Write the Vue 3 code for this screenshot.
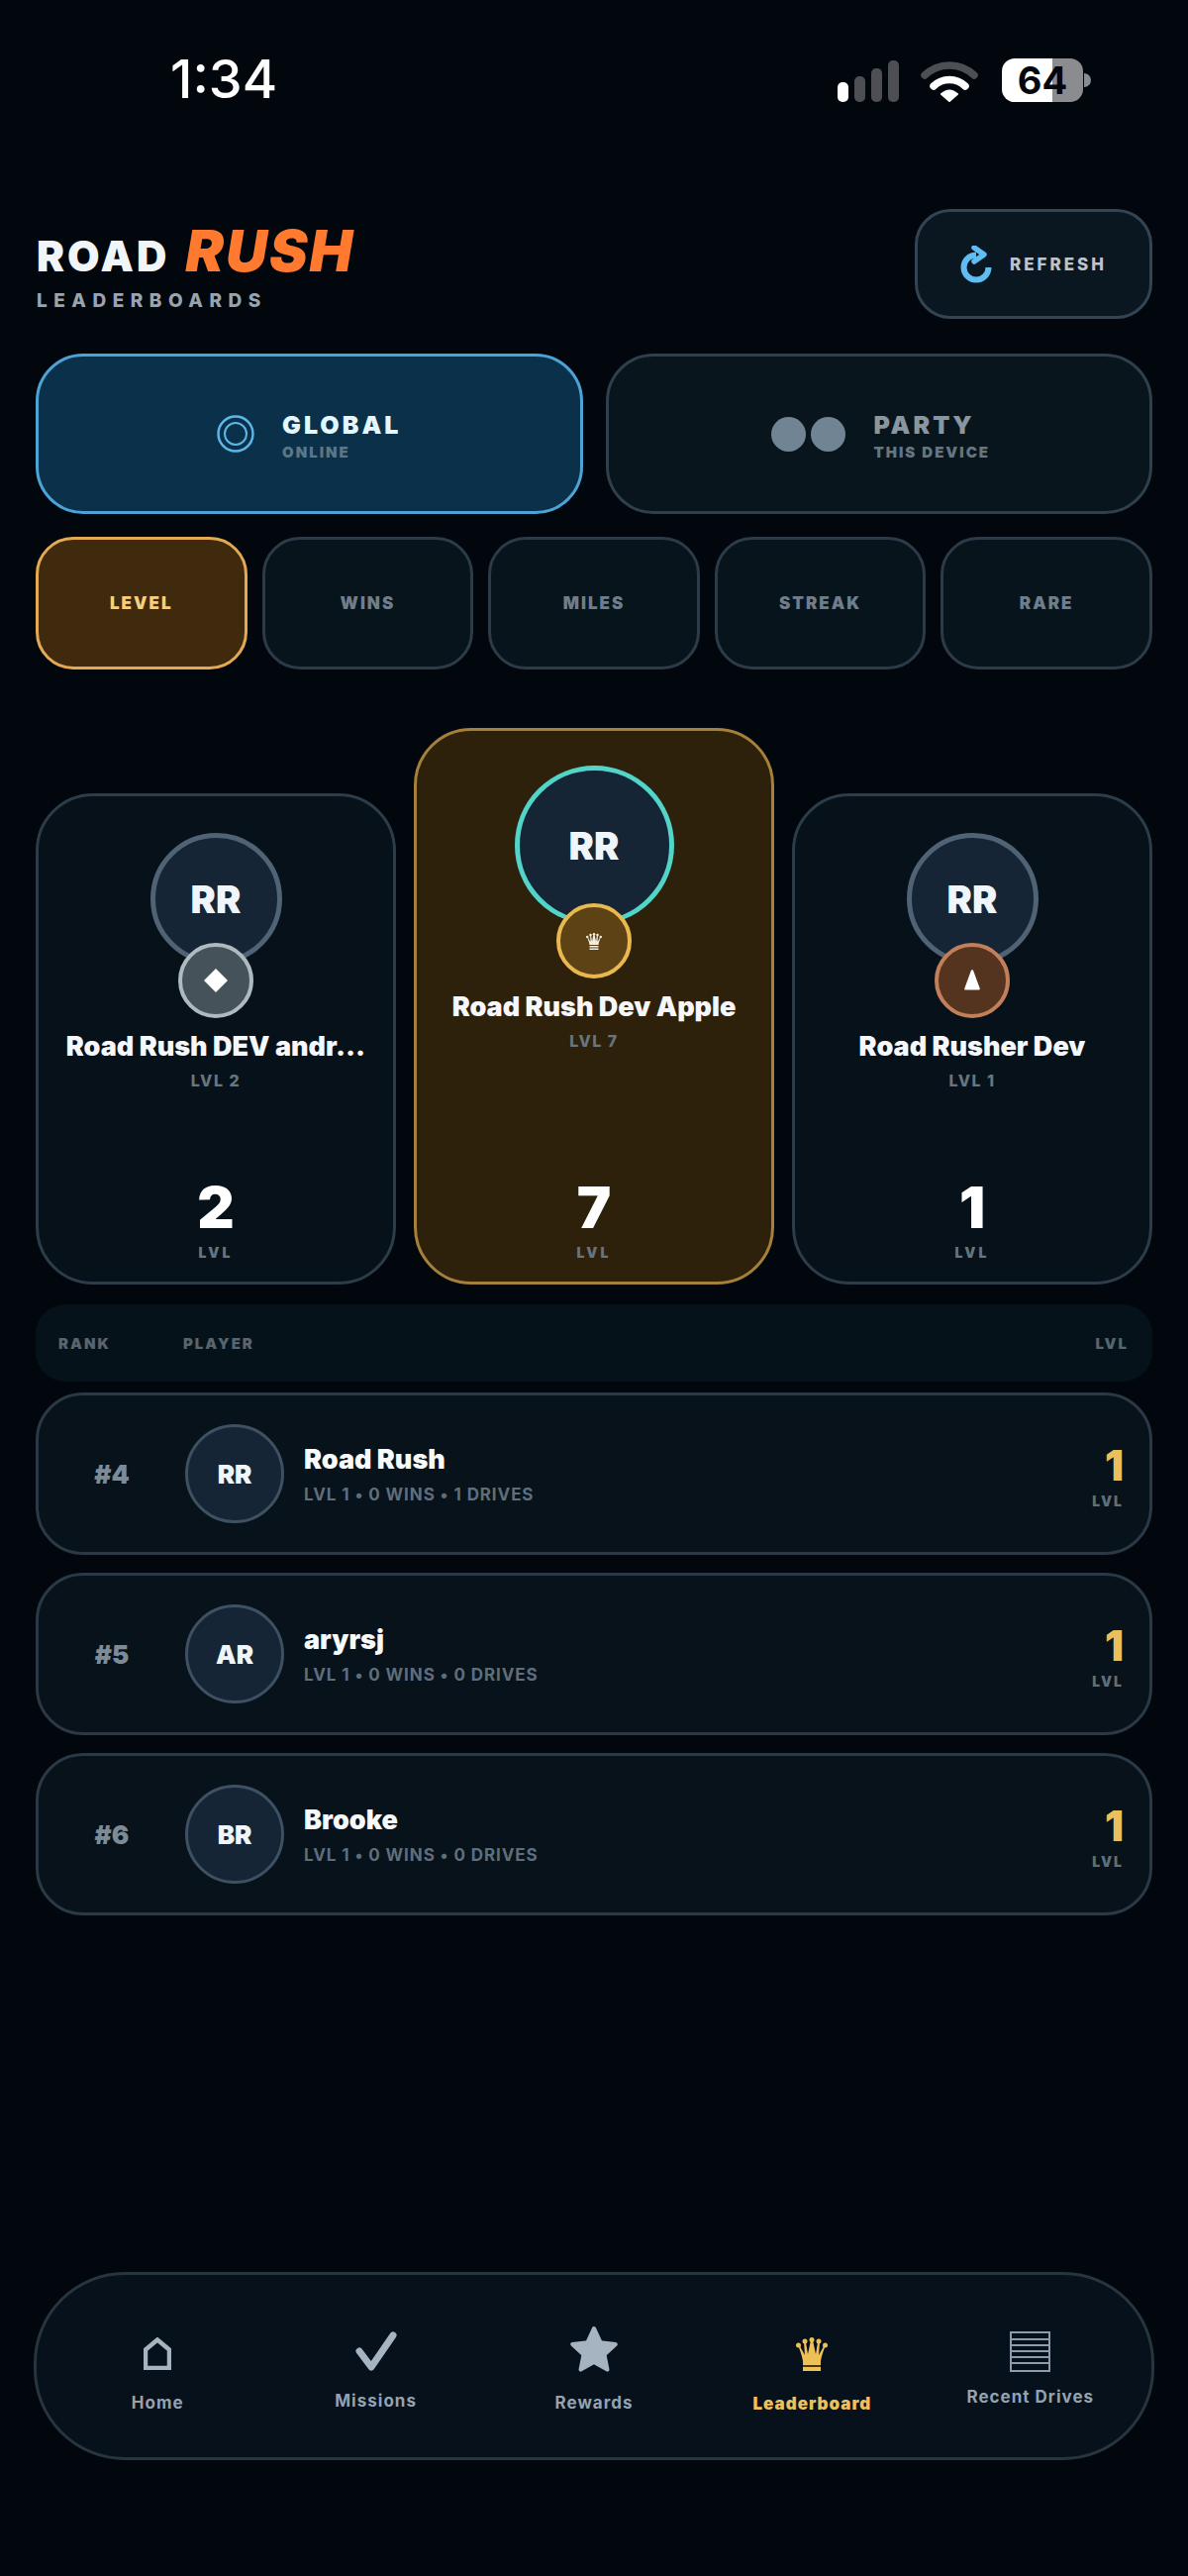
<script setup>
const metrics = ['LEVEL', 'WINS', 'MILES', 'STREAK', 'RARE']

const rows = [
  { rank: '#4', initials: 'RR', name: 'Road Rush', sub: 'LVL 1 • 0 WINS • 1 DRIVES', value: 1 },
  { rank: '#5', initials: 'AR', name: 'aryrsj', sub: 'LVL 1 • 0 WINS • 0 DRIVES', value: 1 },
  { rank: '#6', initials: 'BR', name: 'Brooke', sub: 'LVL 1 • 0 WINS • 0 DRIVES', value: 1 }
]
</script>

<template>
  <div class="page">
    <div class="status">
      <div class="time">1:34</div>
      <div class="status-icons">
        <div class="signal">
          <span class="bar on b1"></span>
          <span class="bar b2"></span>
          <span class="bar b3"></span>
          <span class="bar b4"></span>
        </div>
        <svg class="wifi" width="58" height="42" viewBox="0 0 58 42">
          <path d="M4 15A36 36 0 0 1 54 15" fill="none" stroke="#4d4f54" stroke-width="7.5" stroke-linecap="round" />
          <path d="M13 26A23 23 0 0 1 45 26" fill="none" stroke="#fff" stroke-width="7.5" stroke-linecap="round" />
          <path d="M21 34Q29 27 37 34L29 41Z" fill="#fff" stroke="#fff" stroke-width="2" stroke-linejoin="round" />
        </svg>
        <div class="battery"><span>64</span></div>
        <span class="nub"></span>
      </div>
    </div>

    <header class="head">
      <div>
        <h1 class="title"><span class="road">ROAD</span> <em class="rush">RUSH</em></h1>
        <div class="subtitle">LEADERBOARDS</div>
      </div>
      <button class="refresh">
        <svg width="32" height="38" viewBox="0 0 32 38">
          <path d="M16 9.500A12.500 12.500 0 1 0 28.500 22" fill="none" stroke="#5fbdf2" stroke-width="6" />
          <path d="M14 2L24 9L14 16" fill="none" stroke="#5fbdf2" stroke-width="5.500" stroke-linejoin="round" stroke-linecap="round" />
        </svg>
        <span>REFRESH</span>
      </button>
    </header>

    <div class="scopes">
      <div class="scope active">
        <svg width="38" height="38" viewBox="0 0 38 38">
          <circle cx="19" cy="19" r="17.500" fill="none" stroke="#5db6e8" stroke-width="2.500" />
          <circle cx="19" cy="19" r="11" fill="none" stroke="#5db6e8" stroke-width="2" />
        </svg>
        <div>
          <div class="scope-name">GLOBAL</div>
          <div class="scope-sub">ONLINE</div>
        </div>
      </div>
      <div class="scope">
        <div class="dots"><span></span><span></span></div>
        <div>
          <div class="scope-name">PARTY</div>
          <div class="scope-sub">THIS DEVICE</div>
        </div>
      </div>
    </div>

    <div class="metrics">
      <div v-for="(m, i) in metrics" :key="m" class="metric" :class="{ active: i === 0 }">{{ m }}</div>
    </div>

    <div class="podium">
      <div class="card">
        <div class="avatar-lg">RR</div>
        <div class="medal silver">
          <svg width="26" height="26" viewBox="0 0 26 26"><path d="M13 1L25 13L13 25L1 13Z" fill="#fff" /></svg>
        </div>
        <div class="card-name">Road Rush DEV andr...</div>
        <div class="card-lvl">LVL 2</div>
        <div class="card-num">2</div>
        <div class="card-unit">LVL</div>
      </div>
      <div class="card first">
        <div class="avatar-lg big">RR</div>
        <div class="medal gold">
          <svg width="16" height="17" viewBox="0 0 32 34">
            <path d="M7 24C6 18 4 13 2.500 9L4 9C6 13 8 16 9 18L8 5L10 5L12 17L15 3L17 3L20 17L22 5L24 5L23 18C24 16 26 13 28 9L29.500 9C28 13 26 18 25 24Z" fill="#f3efe4" />
            <circle cx="2.500" cy="8" r="2.500" fill="#f3efe4" /><circle cx="9" cy="4" r="2.500" fill="#f3efe4" />
            <circle cx="16" cy="2.500" r="2.500" fill="#f3efe4" /><circle cx="23" cy="4" r="2.500" fill="#f3efe4" />
            <circle cx="29.500" cy="8" r="2.500" fill="#f3efe4" />
            <rect x="7" y="26" width="18" height="3" fill="#f3efe4" /><rect x="7" y="31" width="18" height="3" fill="#f3efe4" />
          </svg>
        </div>
        <div class="card-name">Road Rush Dev Apple</div>
        <div class="card-lvl">LVL 7</div>
        <div class="card-num">7</div>
        <div class="card-unit">LVL</div>
      </div>
      <div class="card">
        <div class="avatar-lg">RR</div>
        <div class="medal bronze">
          <svg width="24" height="24" viewBox="0 0 20 20"><path d="M10 2L15.500 17H4.500Z" fill="#fff" stroke="#fff" stroke-width="2" stroke-linejoin="round" /></svg>
        </div>
        <div class="card-name">Road Rusher Dev</div>
        <div class="card-lvl">LVL 1</div>
        <div class="card-num">1</div>
        <div class="card-unit">LVL</div>
      </div>
    </div>

    <div class="table-head">
      <span class="th-rank">RANK</span>
      <span class="th-player">PLAYER</span>
      <span>LVL</span>
    </div>

    <div class="rows">
      <div v-for="r in rows" :key="r.rank" class="row">
        <div class="rank">{{ r.rank }}</div>
        <div class="avatar">{{ r.initials }}</div>
        <div class="who">
          <div class="who-name">{{ r.name }}</div>
          <div class="who-sub">{{ r.sub }}</div>
        </div>
        <div class="score">
          <div class="score-num">{{ r.value }}</div>
          <div class="score-unit">LVL</div>
        </div>
      </div>
    </div>

    <nav class="nav">
      <div class="nav-item">
        <svg class="ic-home" width="28" height="33" viewBox="0 0 28 33">
          <path d="M2 31V12.500L14 2.500L26 12.500V31Z" fill="none" stroke="#a6b3c0" stroke-width="4.500" />
        </svg>
        <span>Home</span>
      </div>
      <div class="nav-item">
        <svg class="ic-check" width="44" height="44" viewBox="0 0 44 44">
          <path d="M5 21L17 37L39 5" fill="none" stroke="#a6b3c0" stroke-width="7" stroke-linecap="round" stroke-linejoin="round" />
        </svg>
        <span>Missions</span>
      </div>
      <div class="nav-item">
        <svg class="ic-star" width="54" height="52" viewBox="0 0 50 50">
          <path d="M25 4L31.200 17.500L45.900 19.200L35 29.200L37.900 43.800L25 36.500L12.100 43.800L15 29.200L4.100 19.200L18.800 17.500Z" fill="#a6b3c0" stroke="#a6b3c0" stroke-width="4" stroke-linejoin="round" />
        </svg>
        <span>Rewards</span>
      </div>
      <div class="nav-item lead">
        <svg class="ic-crown" width="32" height="34" viewBox="0 0 32 34">
          <path d="M7 24C6 18 4 13 2.500 9L4 9C6 13 8 16 9 18L8 5L10 5L12 17L15 3L17 3L20 17L22 5L24 5L23 18C24 16 26 13 28 9L29.500 9C28 13 26 18 25 24Z" fill="#efc058" />
          <circle cx="2.500" cy="8" r="2.500" fill="#efc058" /><circle cx="9" cy="4" r="2.500" fill="#efc058" />
          <circle cx="16" cy="2.500" r="2.500" fill="#efc058" /><circle cx="23" cy="4" r="2.500" fill="#efc058" />
          <circle cx="29.500" cy="8" r="2.500" fill="#efc058" />
          <rect x="7" y="24" width="18" height="10" fill="#efc058" /><rect x="7" y="28" width="18" height="2" fill="#4a3412" />
        </svg>
        <span>Leaderboard</span>
      </div>
      <div class="nav-item recent">
        <svg class="ic-list" width="41" height="41" viewBox="0 0 41 41">
          <rect x="1" y="1" width="39" height="39" fill="none" stroke="#8e9bab" stroke-width="2" />
          <path d="M1 7H40M1 13H40M1 19H40M1 25H40M1 31H40" stroke="#8e9bab" stroke-width="2" transform="translate(0 1)" />
        </svg>
        <span>Recent Drives</span>
      </div>
    </nav>
  </div>
</template>

<style>
  html, body {
    margin: 0;
    background: #02060d;
  }
</style>

<style scoped>
  * {
    box-sizing: border-box;
  }

  .page {
    width: 1200px;
    height: 2601px;
    padding: 0 36px;
    font-family: Inter, "Liberation Sans", sans-serif;
    color: #fff;
    background: #02060d;
  }

  .status {
    height: 211px;
    padding: 50px 62px 0 136px;
    display: flex;
    justify-content: space-between;
    align-items: flex-start;
  }

  .time {
    font-size: 54px;
    line-height: 60px;
    font-weight: 500;
  }

  .status-icons {
    display: flex;
    align-items: flex-end;
    margin-top: 9px;
  }

  .signal {
    display: flex;
    align-items: flex-end;
    gap: 6px;
    margin-right: 22px;
  }

  .bar {
    width: 11px;
    border-radius: 5px;
    background: #4d4f54;
  }

  .bar.on { background: #fff; }
  .b1 { height: 20px; }
  .b2 { height: 26px; }
  .b3 { height: 34px; }
  .b4 { height: 42px; }

  .wifi {
    margin-right: 24px;
  }

  .battery {
    width: 82px;
    height: 44px;
    border-radius: 13px;
    background: linear-gradient(90deg, #fff 0 62%, #8b8c90 62% 100%);
    display: flex;
    align-items: center;
    justify-content: center;
    color: #05070c;
    font-size: 38px;
    font-weight: 700;
    line-height: 44px;
  }

  .nub {
    width: 7px;
    height: 14px;
    margin-bottom: 15px;
    margin-left: 1px;
    border-radius: 0 7px 7px 0;
    background: #8b8c90;
  }

  .head {
    height: 111px;
    display: flex;
    justify-content: space-between;
    align-items: flex-start;
  }

  .title {
    margin: 14px 0 0 1px;
    line-height: 56px;
    font-size: 42px;
    font-weight: 900;
    display: flex;
    align-items: baseline;
    gap: 16px;
  }

  .road {
    color: #f2f5f8;
    letter-spacing: 3px;
  }

  .rush {
    font-size: 58px;
    color: #ff7a2f;
    font-style: italic;
    letter-spacing: 2px;
  }

  .subtitle {
    margin: 6px 0 0 1px;
    font-size: 19px;
    line-height: 22px;
    font-weight: 800;
    letter-spacing: 6.500px;
    color: #98a3ad;
  }

  .refresh {
    width: 240px;
    height: 111px;
    border: 3px solid #334554;
    border-radius: 36px;
    background: #0a1620;
    display: flex;
    align-items: center;
    justify-content: center;
    gap: 18px;
    font-family: inherit;
    font-size: 17px;
    font-weight: 800;
    letter-spacing: 3px;
    color: #b8c4ce;
  }

  .scopes {
    margin-top: 35px;
    display: grid;
    grid-template-columns: 1fr 1fr;
    gap: 23px;
  }

  .scope {
    height: 162px;
    border: 3.500px solid #2f3f4b;
    border-radius: 48px;
    background: #08151d;
    display: flex;
    align-items: center;
    justify-content: center;
    gap: 28px;
  }

  .scope.active {
    background: #0a3149;
    border-color: #4ba3d6;
  }

  .scope-name {
    padding-top: 3px;
    font-size: 25px;
    line-height: 30px;
    font-weight: 900;
    letter-spacing: 3px;
    color: #8996a0;
  }

  .scope-sub {
    margin-top: 4px;
    font-size: 15px;
    line-height: 18px;
    font-weight: 900;
    letter-spacing: 2px;
    color: #66757f;
  }

  .active .scope-name { color: #e6f6ff; }
  .active .scope-sub { color: #5a7688; }

  .dots {
    display: flex;
    gap: 5px;
    margin-left: 4px;
  }

  .dots span {
    width: 35px;
    height: 35px;
    border-radius: 50%;
    background: #718494;
  }

  .metrics {
    margin-top: 23px;
    display: grid;
    grid-template-columns: repeat(5, 1fr);
    gap: 15px;
  }

  .metric {
    height: 134px;
    border: 3.500px solid #2c3b47;
    border-radius: 38px;
    background: #08141c;
    display: flex;
    align-items: center;
    justify-content: center;
    font-size: 17px;
    font-weight: 900;
    letter-spacing: 2px;
    color: #6f7e8a;
  }

  .metric.active {
    background: #3f2a0d;
    border-color: #e3a953;
    color: #f5cf7f;
  }

  .podium {
    margin-top: 59px;
    display: grid;
    grid-template-columns: repeat(3, 364px);
    justify-content: space-between;
    align-items: end;
  }

  .card {
    height: 496px;
    padding-top: 37px;
    border: 3.500px solid #2d3c49;
    border-radius: 58px;
    background: #06111a;
    display: flex;
    flex-direction: column;
    align-items: center;
  }

  .card.first {
    height: 562px;
    padding-top: 35px;
    border-color: #a5803a;
    background: #2e210b;
  }

  .avatar-lg {
    width: 133px;
    height: 133px;
    flex: none;
    border: 5px solid #4f6375;
    border-radius: 50%;
    background: #152535;
    display: flex;
    align-items: center;
    justify-content: center;
    font-size: 38px;
    font-weight: 900;
    color: #f0f5fa;
  }

  .avatar-lg.big {
    width: 161px;
    height: 161px;
    border-color: #52d4c8;
  }

  .medal {
    position: relative;
    width: 76px;
    height: 76px;
    flex: none;
    margin-top: -22px;
    border: 4px solid;
    border-radius: 50%;
    display: flex;
    align-items: center;
    justify-content: center;
  }

  .silver { background: #45525a; border-color: #aeb9c0; }
  .gold { background: #5c4214; border-color: #e9b84f; }
  .bronze { background: #54331f; border-color: #c1805a; }

  .card-name {
    margin-top: 12px;
    font-size: 27px;
    line-height: 34px;
    font-weight: 900;
    color: #f5f7fa;
  }

  .card-lvl {
    margin-top: 7px;
    font-size: 16px;
    line-height: 20px;
    font-weight: 800;
    letter-spacing: 1.500px;
    color: #66757f;
  }

  .card-num {
    margin-top: auto;
    font-size: 58px;
    line-height: 64px;
    font-weight: 900;
    color: #fff;
    transform: translateY(-1px);
  }

  .card-unit {
    margin: 4px 0 20px;
    font-size: 14px;
    line-height: 18px;
    font-weight: 900;
    letter-spacing: 3px;
    color: #66757f;
  }

  .table-head {
    margin-top: 20px;
    height: 78px;
    padding: 0 24px 0 23px;
    border-radius: 30px;
    background: #06121a;
    display: flex;
    align-items: center;
    font-size: 15px;
    font-weight: 900;
    letter-spacing: 2px;
    color: #56656f;
  }

  .th-rank { width: 126px; }
  .th-player { flex: 1; }

  .rows {
    margin-top: 11px;
    display: flex;
    flex-direction: column;
    gap: 18px;
  }

  .row {
    height: 164px;
    padding: 0 26px 0 0;
    border: 3.500px solid #2a3945;
    border-radius: 48px;
    background: #07121a;
    display: flex;
    align-items: center;
  }

  .rank {
    width: 148px;
    flex: none;
    text-align: center;
    font-size: 26px;
    font-weight: 900;
    color: #7d8b96;
  }

  .avatar {
    width: 100px;
    height: 100px;
    flex: none;
    border: 3px solid #3e5163;
    border-radius: 50%;
    background: #152535;
    display: flex;
    align-items: center;
    justify-content: center;
    font-size: 26px;
    font-weight: 900;
    color: #f0f5fa;
  }

  .who {
    flex: 1;
    margin-left: 20px;
    margin-top: 1px;
  }

  .who-name {
    font-size: 27px;
    line-height: 34px;
    font-weight: 900;
    color: #f7f9fb;
  }

  .who-sub {
    margin-top: 7px;
    font-size: 17px;
    line-height: 22px;
    font-weight: 700;
    letter-spacing: 0.900px;
    color: #5f6e7a;
  }

  .score {
    text-align: right;
    margin-top: 3px;
  }

  .score-num {
    font-size: 42px;
    line-height: 48px;
    font-weight: 900;
    color: #eabf5c;
    transform: translateY(1px);
  }

  .score-unit {
    margin-top: 4px;
    font-size: 14px;
    line-height: 18px;
    font-weight: 900;
    letter-spacing: 2px;
    color: #5f6e7a;
  }

  .nav {
    margin: 360px -2px 0;
    height: 190px;
    padding: 0 12px;
    border: 3.500px solid #27353f;
    border-radius: 92px;
    background: #07111b;
    display: grid;
    grid-template-columns: repeat(5, 1fr);
  }

  .nav-item {
    display: flex;
    flex-direction: column;
    align-items: center;
    justify-content: flex-start;
    font-size: 17px;
    line-height: 22px;
    font-weight: 700;
    letter-spacing: 1px;
    color: #95a2b0;
  }

  .nav-item span {
    display: block;
  }

  .ic-home { margin-top: 63px; margin-bottom: 22px; }
  .ic-check { margin-top: 56px; margin-bottom: 16px; }
  .ic-star { margin-top: 50px; margin-bottom: 16px; }
  .ic-crown { margin-top: 63px; margin-bottom: 22px; }
  .ic-list { margin-top: 57px; margin-bottom: 14px; }

  .lead {
    font-weight: 900;
    color: #efc058;
  }
</style>
